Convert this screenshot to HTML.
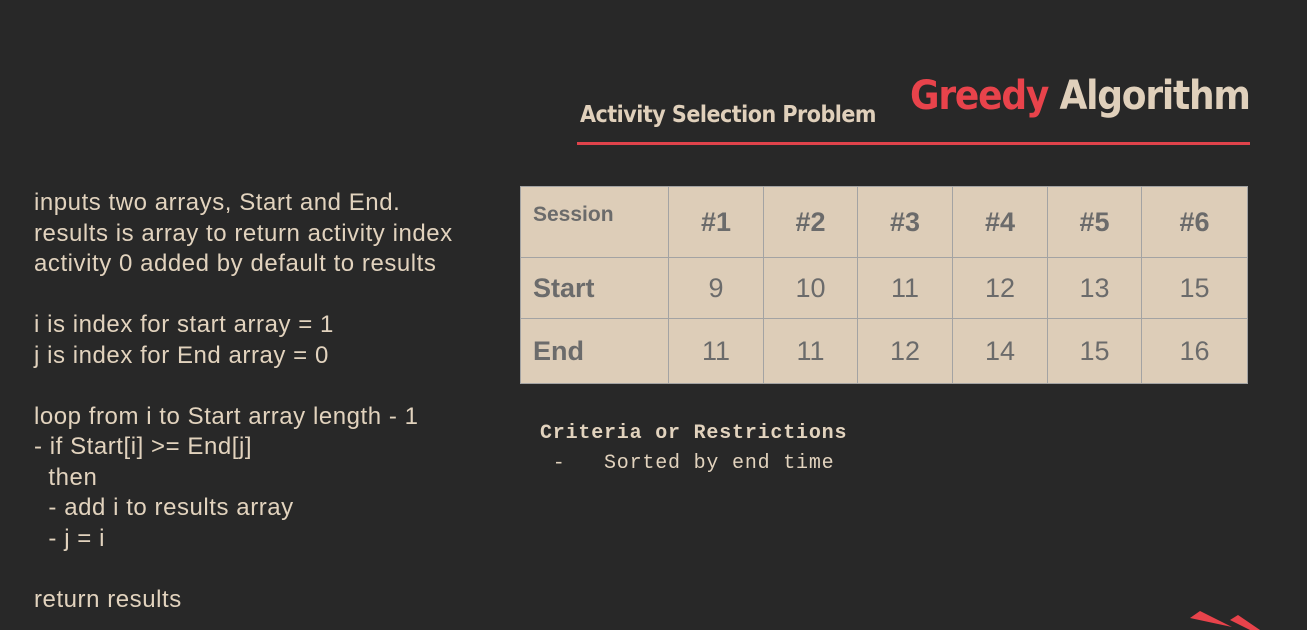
<!DOCTYPE html>
<html><head><style>
body{margin:0;width:1307px;height:630px;background:#282828;overflow:hidden;position:relative;font-family:"Liberation Sans",sans-serif}
.l{position:absolute;left:34px;top:188px;color:#e2d3be;font-size:24px;letter-spacing:0.55px;line-height:30.5px;white-space:pre}
.t1{position:absolute;left:580px;top:102px;color:#e0d0bb;font-weight:bold;font-size:23px;letter-spacing:-0.5px;font-family:"DejaVu Sans Condensed","Liberation Sans Narrow",sans-serif}
.t2{position:absolute;left:910px;top:73px;font-weight:bold;font-size:40px;letter-spacing:-1.2px;color:#e0d0bb;font-family:"DejaVu Sans Condensed","Liberation Sans Narrow",sans-serif}
.t2 span{color:#e8434b}
.line{position:absolute;left:577px;top:142px;width:673px;height:3px;background:#e0434b}
table{position:absolute;left:520px;top:186px;border-collapse:collapse;background:#ddcdb8;color:#6b6b6b}
td{border:1.5px solid #a3a3a3;text-align:center;font-size:27px;padding:0}
td.h{text-align:left;padding-left:12px;font-weight:bold}
.c{position:absolute;left:540px;top:419px;color:#e2d3be;font-family:"Liberation Mono",monospace;font-size:20px;letter-spacing:0.8px;line-height:30px;white-space:pre}
</style></head><body>
<div class="l">inputs two arrays, Start and End.
results is array to return activity index
activity 0 added by default to results

i is index for start array = 1
j is index for End array = 0

loop from i to Start array length - 1
- if Start[i] &gt;= End[j]
  then
  - add i to results array
  - j = i

return results</div>
<div class="t1">Activity Selection Problem</div>
<div class="t2"><span>Greedy</span> Algorithm</div>
<div class="line"></div>
<table>
<tr style="height:71px"><td class="h" style="width:135px;font-size:21px;vertical-align:top;padding-top:16px">Session</td><td style="width:94px;font-weight:bold">#1</td><td style="width:93px;font-weight:bold">#2</td><td style="width:94px;font-weight:bold">#3</td><td style="width:94px;font-weight:bold">#4</td><td style="width:93px;font-weight:bold">#5</td><td style="width:105px;font-weight:bold">#6</td></tr>
<tr style="height:61px"><td class="h">Start</td><td>9</td><td>10</td><td>11</td><td>12</td><td>13</td><td>15</td></tr>
<tr style="height:65px"><td class="h">End</td><td>11</td><td>11</td><td>12</td><td>14</td><td>15</td><td>16</td></tr>
</table>
<div class="c"><b>Criteria or Restrictions</b>
 -   Sorted by end time</div>
<svg style="position:absolute;left:1150px;top:590px" width="157" height="40"><polygon points="40,28 50,21 82,37" fill="#e8434b"/><polygon points="80,30 88,25 110,40 100,40" fill="#e8434b"/></svg>
</body></html>
